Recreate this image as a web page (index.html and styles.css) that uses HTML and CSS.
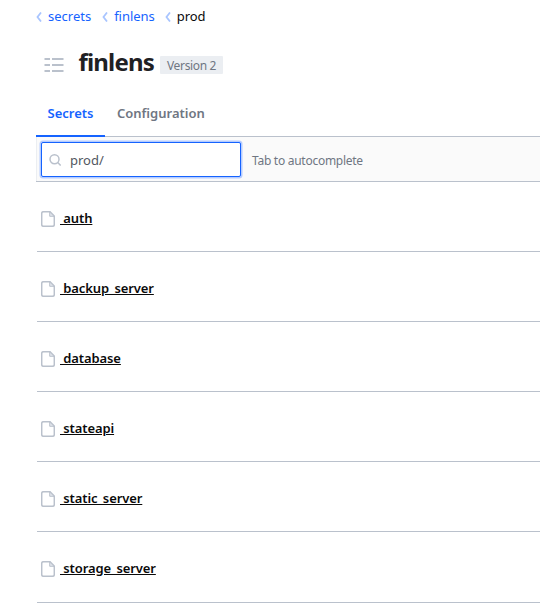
FILE: index.html
```html
<!DOCTYPE html>
<html lang="en"><head><meta charset="utf-8"><title>finlens</title><link rel="stylesheet" href="styles.css"></head>
<body>
<svg class="defs" aria-hidden="true"><defs>
<symbol id="file" viewBox="0 0 14 16"><path d="M2.500.7H9l4.300 4.300v8.500q0 1.800-1.800 1.800h-9Q.7 15.300.7 13.500v-11Q.7.7 2.500.7z"/><path class="fold" d="M8.700 1v4.300H13z"/></symbol>
<symbol id="chev" viewBox="0 0 6 10"><path d="M5 .5 1.500 5 5 9.500"/></symbol>
</defs></svg>
<main class="page">
<nav class="crumbs"><svg><use href="#chev"/></svg><a class="c1">secrets</a><svg><use href="#chev"/></svg><a class="c2">finlens</a><svg><use href="#chev"/></svg><span class="c3">prod</span></nav>
<header class="title"><svg class="list" viewBox="0 0 20 16"><path d="M.5 3H6M8 3h11.500M.5 9H6M8 9h11.500M.5 15H6M8 15h11.500"/></svg><h1>finlens</h1><span class="badge">Version 2</span></header>
<nav class="tabs"><a class="tab active">Secrets</a><a class="tab">Configuration</a></nav>
<div class="toolbar"><label class="search"><svg viewBox="0 0 12 12"><circle cx="5.500" cy="5.300" r="4.500"/><path d="m8.700 8.500 3 3"/></svg><span>prod/</span></label><span class="hint">Tab to autocomplete</span></div>
<section class="rows">
<a class="row"><svg><use href="#file"/></svg><span>&nbsp;auth</span></a>
<a class="row"><svg><use href="#file"/></svg><span>&nbsp;backup_server</span></a>
<a class="row"><svg><use href="#file"/></svg><span>&nbsp;database</span></a>
<a class="row"><svg><use href="#file"/></svg><span>&nbsp;stateapi</span></a>
<a class="row"><svg><use href="#file"/></svg><span>&nbsp;static_server</span></a>
<a class="row"><svg><use href="#file"/></svg><span>&nbsp;storage_server</span></a>
</section>
</main></body></html>
```
FILE: styles.css
```css
*{box-sizing:border-box}
body{margin:0;background:#fff;color:#0a0a0a;font:13px/20px "Noto Sans","Open Sans",sans-serif}
.defs{position:absolute;width:0;height:0}
svg{fill:none;flex:none}
.page{margin-left:36px;height:613px;overflow:hidden}
.crumbs{display:flex;align-items:center;height:32px;margin-bottom:1px;color:#1563ff}
.crumbs svg{width:6px;height:10px;margin:1px 6px 0 0;stroke:#a9c5ff;stroke-width:1.8}
.c1{margin-right:11px}
.c2{margin-right:10px;letter-spacing:-.05px}
.c3{color:#0a0a0a}
.title{display:flex;align-items:center;height:60px}
.list{width:20px;height:16px;margin:2px 14px 0 8px;stroke:#bac1cc;stroke-width:2}
h1{width:75px;margin:0 7px 2px 0;font-size:24px;line-height:32px;font-weight:700;letter-spacing:-.8px;color:#1f2124;text-indent:.4px}
.badge{height:18px;width:63px;margin-top:4px;padding-left:7px;border-radius:1px;background:#ebeef2;color:#6f7682;font-size:12px;line-height:19px;letter-spacing:-.35px;white-space:nowrap}
.tabs{display:flex;height:44px;border-bottom:1px solid #bac1cc}
.tab{height:44px;padding:10px 12px;color:#6f7682;font-weight:600}
.active{width:69px;padding-left:11.5px;color:#1563ff;border-bottom:2px solid #1563ff}
.toolbar{display:flex;align-items:center;height:45px;border:solid #bac1cc;border-width:0 0 1px;box-shadow:inset 1px 0 #ebeef2;background:#fafafa}
.search{display:flex;align-items:center;width:200px;height:35px;margin:1px 0 0 5px;border:1px solid #1563ff;border-radius:2px;box-shadow:0 0 0 1.5px #b5ccff;background:#fff;color:#525761}
.search svg{width:12px;height:12px;margin:0 9px 0 7px;stroke:#bac1cc;stroke-width:1.5}
.hint{margin:3px 0 0 11px;color:#6f7682;font-size:12px;letter-spacing:-.27px}
.rows{margin-left:1px}
.row{display:flex;align-items:center;height:70px;padding:3px 0 0 4px;border-bottom:1px solid #bac1cc;font-weight:600;letter-spacing:-.1px;text-decoration:underline}
.row:last-child{height:71px;padding-top:2px}
.row svg{width:14px;height:16px;margin:2px 5px 0 0;stroke:#bac1cc;stroke-width:1.5}
.fold{fill:#e3e7ed;stroke-width:1}
```
